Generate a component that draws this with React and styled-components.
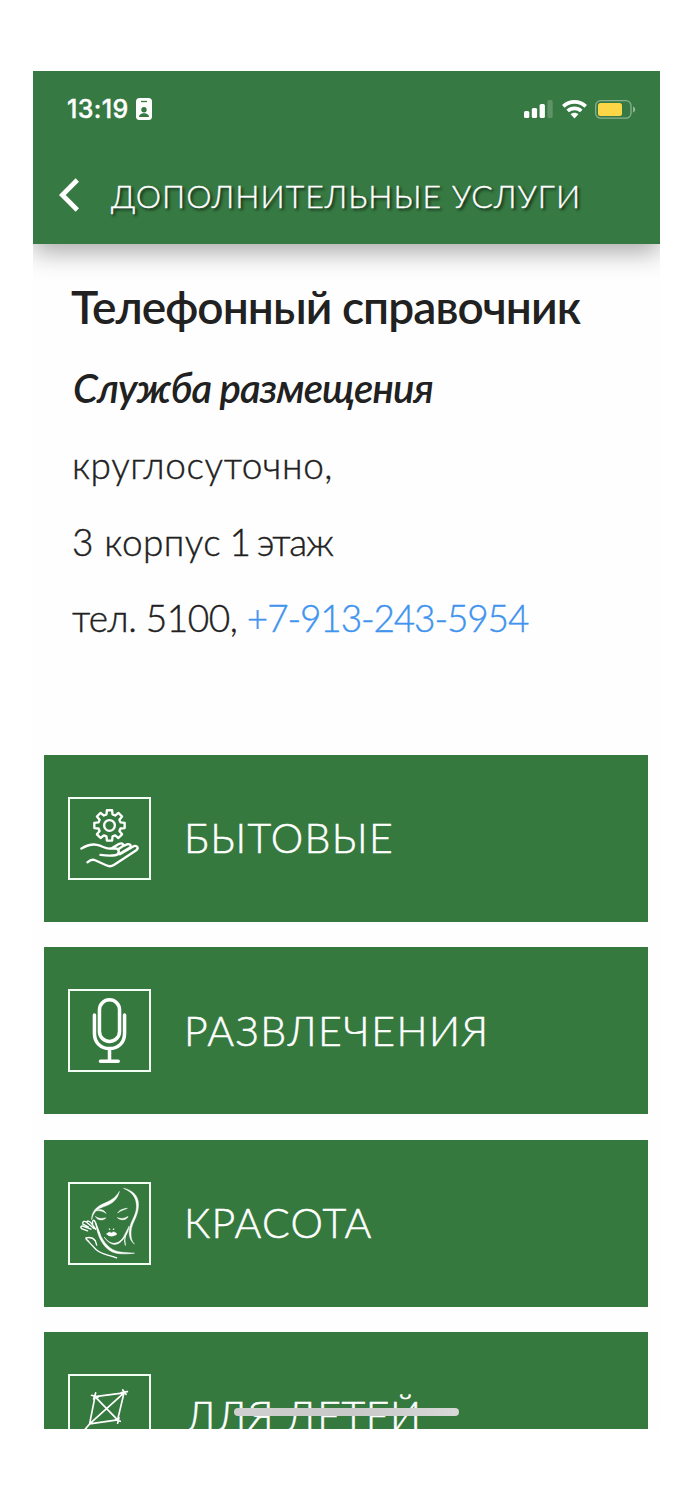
import React from "react";
import styled, { createGlobalStyle } from "styled-components";

const Global = createGlobalStyle`
  *{box-sizing:border-box}
  body{margin:0;background:#fff;font-family:Lato,"Open Sans",sans-serif;}
`;
const Page = styled.div`width:693px;height:1500px;padding:71px 33px;overflow:hidden;background:#fff;`;
const Screen = styled.main`position:relative;width:627px;height:1358px;overflow:hidden;background:#fefefe;display:flex;flex-direction:column;`;
const Header = styled.header`flex:none;height:173px;background:#367942;box-shadow:0 8px 24px rgba(0,0,0,.34);z-index:1;`;
const StatusBar = styled.div`height:76px;display:flex;align-items:center;justify-content:space-between;padding:0 24px 0 34px;color:#fff;`;
const Group = styled.div`display:flex;align-items:center;gap:${p => p.$gap}px;`;
const Clock = styled.span`font:500 25px/30px Inter,sans-serif;letter-spacing:.4px;-webkit-text-stroke:.4px #fff;`;
const Nav = styled.div`height:97px;display:flex;align-items:center;padding-left:26px;color:#fff;svg{margin-bottom:2px;}`;
const Title = styled.h1`margin:0 0 0 32px;font-weight:300;font-size:32px;line-height:40px;letter-spacing:1px;white-space:nowrap;-webkit-text-stroke:.4px #fff;text-shadow:2px 2px 3px rgba(0,0,0,.8);`;
const Info = styled.section`flex:none;height:510.5px;padding:34px 0 0 39px;color:#212121;white-space:nowrap;`;
const Heading = styled.h2`margin:0 0 0 -1px;font-size:46px;line-height:58px;font-weight:600;letter-spacing:-.93px;`;
const Sub = styled.h3`margin:27px 0 27px 1px;font-size:40px;line-height:50px;font-weight:600;font-style:italic;letter-spacing:-.87px;`;
const Line = styled.p`margin:0 0 26.5px;font-size:37px;line-height:50px;font-weight:300;-webkit-text-stroke:.4px currentColor;letter-spacing:${p => p.$ls || 0}px;`;
const Digit = styled.span`margin:0 -5px 0 -2px;`;
const Word = styled.span`letter-spacing:-1.1px;`;
const Phone = styled.a`color:#4194ee;letter-spacing:${p => p.$ls || 0}px;`;
const List = styled.nav`flex:none;display:flex;flex-direction:column;gap:25.5px;padding:0 12px 0 11px;`;
const Card = styled.div`height:167px;flex:none;background:#35793e;display:flex;align-items:center;gap:33px;padding-left:24px;color:#fff;`;
const Frame = styled.div`width:83px;height:83px;border:2px solid #f2fff4;display:flex;align-items:center;justify-content:center;
  svg{flex:none;width:83px;height:83px;fill:none;stroke:#fff;stroke-linecap:round;stroke-linejoin:round;}`;
const Label = styled.span`margin-left:${p => p.$indent || 0}px;font-size:41px;line-height:50px;font-weight:300;-webkit-text-stroke:.5px #fff;letter-spacing:${p => p.$ls || 0}px;white-space:nowrap;`;
const HomeBar = styled.div`position:absolute;left:201px;top:1337px;width:225px;height:8px;border-radius:4px;background:linear-gradient(90deg,#d0d0d0,#c8c8c8 50%,#d8d8d8);`;

function gear(cx, cy, n, ro, ri) {
  let d = "";
  for (let i = 0; i < n; i++) {
    const a = (i * 2 * Math.PI) / n - Math.PI / 2;
    const pts = [[-0.27, ri], [-0.17, ro], [0.17, ro], [0.27, ri]];
    pts.forEach(([o, r], k) => {
      d += (i || k ? "L" : "M") + (cx + r * Math.cos(a + o)).toFixed(1) + " " + (cy + r * Math.sin(a + o)).toFixed(1);
    });
  }
  return d + "Z";
}

const CareIcon = () => (
  <svg viewBox="25 35 248 248" strokeWidth="7">
    <path d={gear(149, 120, 8, 46, 34)} />
    <circle cx="149" cy="120" r="16" />
    <path d="M65 189C82 179 98 175 112 178C130 182 136 190 150 189H168C180 190 180 208 166 209C152 211 136 210 122 208" />
    <path d="M83 230C91 223 98 220 106 224L139 239Q151 245 162 238L228 195C238 187 232 179 221 182L180 206" />
    <path d="M158 187L178 175C188 171 194 178 187 183L174 192M187 183L203 176C213 175 216 181 208 187L181 204" />
  </svg>
);
const MicIcon = () => (
  <svg viewBox="25 26 248 248" strokeWidth="10.5">
    <rect x="119" y="58" width="60" height="125" rx="30" />
    <path d="M104 104V158C104 186 122 204 149 204S194 186 194 158V104M149 204V242M122 242H175" />
  </svg>
);
const FaceIcon = () => (
  <svg viewBox="24 20 246 246" strokeWidth="3">
    <g fill="#fff" strokeWidth="1.5">
      <path d="M176 49C168 81 145 88 122 96C107 102 98 113 94 132C94 108 107 94 130 84C153 74 163 68 176 49Z" />
      <path d="M190 39C222 46 237 67 232 99C228 128 212 143 211 166C210 184 212 195 221 204C205 192 203 170 208 151C214 130 227 116 227 92C227 66 215 51 190 39Z" />
      <path d="M139 174C144 167 149 168 153 171C158 166 164 168 169 174C163 181 145 184 139 174Z" />
      <path d="M106 123C115 129 125 129 136 126C132 134 112 136 106 123ZM171 126C181 130 192 128 202 122C198 134 178 135 171 126Z" />
      <path d="M108 105C119 98 131 103 137 113C128 107 119 104 108 105ZM172 111C179 101 190 99 200 98C190 103 181 104 172 111Z" />
      <path d="M106 140C119 184 135 207 156 220C176 231 196 228 221 231C194 234 166 235 149 224C126 209 110 179 106 140Z" />
      <path d="M132 184C148 207 172 208 188 184L205 151C203 172 190 190 177 200C160 212 142 200 132 184Z" />
    </g>
    <path d="M194 180Q190 194 194 207M146 159l2 2M160 159l-2 2" />
    <path d="M82 165L66 159C58 154 63 148 72 152L92 160M84 153L68 145C66 136 73 134 80 140L101 158M90 148L80 140C80 133 87 135 93 142L106 160M97 146C95 130 102 131 105 140L119 177" strokeWidth="4" />
    <path d="M109 207L105 194C97 184 84 184 77 186C75 190 82 191 87 199L107 220C125 236 143 235 168 245" strokeWidth="4" />
  </svg>
);
const KiteIcon = () => (
  <svg viewBox="84 148 246 246" strokeWidth="5">
    <path d="M164 215L250 204L231 284L148 296ZM164 215L231 284M250 204L148 296L126 322" />
    <path d="M154 211L173 217M166 204L160 222M246 195L256 208M242 203L260 200M225 283L239 288M235 278L231 294" />
  </svg>
);

const services = [
  { label: "БЫТОВЫЕ", Icon: CareIcon, ls: 1.3 },
  { label: "РАЗВЛЕЧЕНИЯ", Icon: MicIcon, ls: 1.5 },
  { label: "КРАСОТА", Icon: FaceIcon, ls: 1.25 },
  { label: "ДЛЯ ДЕТЕЙ", Icon: KiteIcon, ls: 0.5, indent: 2 },
];

export default function App() {
  return (
    <Page>
      <Global />
      <Screen>
        <Header>
          <StatusBar>
            <Group $gap={7.5}>
              <Clock>13:19</Clock>
              <svg width="16" height="22" viewBox="0 0 16 22"><rect width="16" height="22" rx="3.5" fill="#fff" /><path d="M5 3.5h6" stroke="#367942" strokeWidth="1.3" /><circle cx="8" cy="11.7" r="2.7" fill="#367942" /><path d="M3 19c0-5 10-5 10 0z" fill="#367942" /></svg>
            </Group>
            <Group $gap={8.5}>
              <svg width="29" height="18" viewBox="0 0 29 18" fill="#fff"><rect y="11" width="5.3" height="7" rx="1.5" /><rect x="7.8" y="8" width="5.3" height="10" rx="1.5" /><rect x="15.6" y="4" width="5.3" height="14" rx="1.5" /><rect x="23.4" width="5.3" height="18" rx="1.5" opacity=".2" /></svg>
              <svg width="25" height="19" viewBox="0 0 25 19" fill="none" stroke="#fff" strokeWidth="3.7"><path d="M1.3 6.4C7.6.4 17.4.4 23.7 6.4M5.7 11c3.8-3.6 9.8-3.6 13.6 0" /><path d="M8.6 14.3c2.3-2 5.5-2 7.8 0L12.5 18.5z" fill="#fff" stroke="none" /></svg>
              <svg width="41" height="19" viewBox="0 0 41 19"><rect x=".7" y=".7" width="35.3" height="17.5" rx="5" fill="none" stroke="#fff" strokeOpacity=".42" strokeWidth="1.3" /><rect x="3" y="3" width="24" height="13" rx="2.5" fill="#fbd748" /><path d="M38 6.5c3 1 3 5 0 6z" fill="#fff" opacity=".45" /></svg>
            </Group>
          </StatusBar>
          <Nav>
            <svg width="20" height="34" viewBox="0 0 20 34" fill="none" stroke="#fff" strokeWidth="4.8"><path d="M18.3 2L3.3 17L18.3 32" /></svg>
            <Title>ДОПОЛНИТЕЛЬНЫЕ УСЛУГИ</Title>
          </Nav>
        </Header>
        <Info>
          <Heading>Телефонный справочник</Heading>
          <Sub>Служба размещения</Sub>
          <Line $ls={0.6}>круглосуточно,</Line>
          <Line $ls={0.4}>3 корпус <Digit>1</Digit> <Word>этаж</Word></Line>
          <Line $ls={-0.5}>тел. 5100, <Phone $ls={-1.15}>+7-913-243-5954</Phone></Line>
        </Info>
        <List>
          {services.map(({ label, Icon, ls, indent }) => (
            <Card key={label}><Frame><Icon /></Frame><Label $ls={ls} $indent={indent}>{label}</Label></Card>
          ))}
        </List>
        <HomeBar />
      </Screen>
    </Page>
  );
}
